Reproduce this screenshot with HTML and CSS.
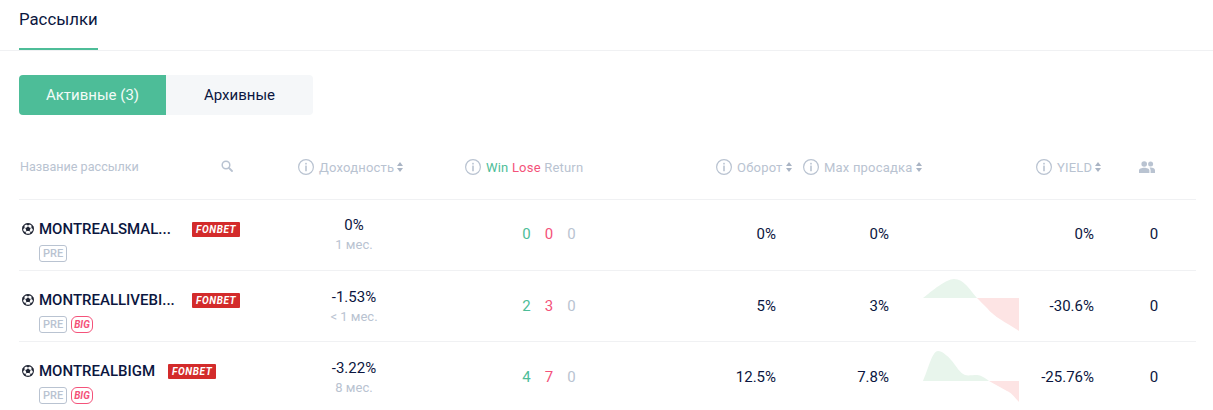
FILE: index.html
```html
<!DOCTYPE html>
<html lang="ru">
<head>
  <meta charset="UTF-8">
  <title>Рассылки</title>
  <link rel="stylesheet" href="styles.css">
</head>
<body>

<svg class="sprite" width="0" height="0">
  <symbol id="ball" viewBox="0 0 12 12">
    <circle cx="6" cy="6" r="5.4" fill="#fff" stroke="#1f2433" stroke-width="1.1"/>
    <path d="M6 3.4 8.5 5.2 7.6 8.1H4.4L3.5 5.2Z" fill="#1f2433"/>
    <path d="M3.4 .8H8.6L6 2.6ZM.6 6.6V3.2L2.6 2.4 2.4 5ZM11.4 6.6V3.2L9.4 2.4 9.6 5ZM1.4 8.4 3.6 8.8 4 11 2.4 10.4ZM10.6 8.4 8.4 8.8 8 11 9.6 10.4Z" fill="#1f2433"/>
    <path d="M6 2.6V3.6M3.6 5.2 2.4 4.8M8.4 5.2 9.6 4.8M4.6 8 3.6 8.8M7.4 8 8.4 8.8" stroke="#1f2433" stroke-width=".6"/>
  </symbol>
  <symbol id="info" viewBox="0 0 16 16">
    <circle cx="8" cy="8" r="7.4" fill="none" stroke="#b9c3d1" stroke-width="1.2"/>
    <rect x="7.2" y="3.7" width="1.6" height="1.7" rx=".5" fill="#b9c3d1"/>
    <rect x="7.2" y="6.6" width="1.6" height="5.6" rx=".5" fill="#b9c3d1"/>
  </symbol>
  <symbol id="sort" viewBox="0 0 6 10">
    <path d="M3 0 6 4H0ZM3 10 0 6H6Z" fill="#a9b4c4"/>
  </symbol>
</svg>

<div class="tabs">
  <div class="tab">Рассылки</div>
</div>

<div class="switch">
  <div class="switch-btn active">Активные (3)</div>
  <div class="switch-btn">Архивные</div>
</div>

<div class="table">
  <div class="row head">
    <div class="h-name">
      <span>Название рассылки</span>
      <svg class="search" width="12" height="12" viewBox="0 0 12 12"><circle cx="5" cy="5" r="3.8" fill="none" stroke="#b9c3d1" stroke-width="1.5"/><path d="M8 8 11 11" stroke="#b9c3d1" stroke-width="1.8" stroke-linecap="round"/></svg>
    </div>
    <div class="h-cell h-profit">
      <svg class="i-info"><use href="#info"/></svg>Доходность<svg class="i-sort"><use href="#sort"/></svg>
    </div>
    <div class="h-cell h-wlr">
      <svg class="i-info"><use href="#info"/></svg><span><span class="win">Win</span> <span class="lose">Lose</span> Return</span>
    </div>
    <div class="h-cell h-turn">
      <svg class="i-info"><use href="#info"/></svg>Оборот<svg class="i-sort"><use href="#sort"/></svg>
    </div>
    <div class="h-cell h-max">
      <svg class="i-info"><use href="#info"/></svg>Мах просадка<svg class="i-sort"><use href="#sort"/></svg>
    </div>
    <div></div>
    <div class="h-cell h-yield">
      <svg class="i-info"><use href="#info"/></svg>YIELD<svg class="i-sort"><use href="#sort"/></svg>
    </div>
    <div class="h-cell h-subs">
      <svg width="16" height="12" viewBox="0 0 16 12"><circle cx="5.2" cy="3" r="2.8" fill="#b9c3d1"/><circle cx="11.6" cy="3" r="2.5" fill="#b9c3d1"/><path d="M0 12V9.6C0 7.6 2.6 6.7 5.2 6.7S10.4 7.6 10.4 9.6V12ZM11.6 12V9.4C11.6 8.3 11.2 7.4 10.5 6.8 11 6.7 11.4 6.6 11.8 6.6 13.9 6.6 16 7.6 16 9.4V12Z" fill="#b9c3d1"/></svg>
    </div>
  </div>

  <div class="row">
    <div class="name-cell">
      <div class="name-line">
        <svg class="ball"><use href="#ball"/></svg>
        <span class="name cut">MONTREALSMAL...</span>
        <span class="bk">FONBET</span>
      </div>
      <div class="tags"><span class="tag">PRE</span></div>
    </div>
    <div class="profit">0%<small>1 мес.</small></div>
    <div class="wlr"><span class="win">0</span><span class="lose">0</span><span class="ret">0</span></div>
    <div class="val turn">0%</div>
    <div class="val">0%</div>
    <div class="chart"></div>
    <div class="val">0%</div>
    <div class="subs">0</div>
  </div>

  <div class="row">
    <div class="name-cell">
      <div class="name-line">
        <svg class="ball"><use href="#ball"/></svg>
        <span class="name cut">MONTREALLIVEBI...</span>
        <span class="bk">FONBET</span>
      </div>
      <div class="tags"><span class="tag">PRE</span><span class="tag big">BIG</span></div>
    </div>
    <div class="profit">-1.53%<small>&lt; 1 мес.</small></div>
    <div class="wlr"><span class="win">2</span><span class="lose">3</span><span class="ret">0</span></div>
    <div class="val turn">5%</div>
    <div class="val">3%</div>
    <div class="chart">
      <svg width="97" height="71" viewBox="0 0 97 71">
        <path d="M1 27C10 20 24 8 32 8 42 8 48 19 55 27Z" fill="#e8f5ec"/>
        <path d="M55 27H97V60C85 52 72 46 65 37 61 33 58 30 55 27Z" fill="#fde4e4"/>
      </svg>
    </div>
    <div class="val">-30.6%</div>
    <div class="subs">0</div>
  </div>

  <div class="row">
    <div class="name-cell">
      <div class="name-line">
        <svg class="ball"><use href="#ball"/></svg>
        <span class="name">MONTREALBIGM</span>
        <span class="bk">FONBET</span>
      </div>
      <div class="tags"><span class="tag">PRE</span><span class="tag big">BIG</span></div>
    </div>
    <div class="profit">-3.22%<small>8 мес.</small></div>
    <div class="wlr"><span class="win">4</span><span class="lose">7</span><span class="ret">0</span></div>
    <div class="val turn">12.5%</div>
    <div class="val">7.8%</div>
    <div class="chart">
      <svg width="97" height="71" viewBox="0 0 97 71">
        <path d="M1 39C6 28 10 9 16 9 20 9 26 14 30 19 34 24 38 31 43 33 46 34 50 33 55 33 59 33 63 36 67 39Z" fill="#e8f5ec"/>
        <path d="M67 39H97V60C92 55 90 51 85 49 79 46 73 42 67 39Z" fill="#fde4e4"/>
      </svg>
    </div>
    <div class="val">-25.76%</div>
    <div class="subs">0</div>
  </div>
</div>

</body>
</html>
```

FILE: styles.css
```css
html, body {
  margin: 0;
  height: 410px;
  overflow: hidden;
}
body {
  font-family: Roboto, Arial, sans-serif;
  font-size: 15px;
  color: #0b1640;
  background: #fff;
}
.sprite {
  display: block;
}
.tabs {
  height: 50px;
  padding-left: 19px;
  border-bottom: 1px solid #f0f1f3;
}
.tab {
  display: inline-block;
  box-sizing: border-box;
  height: 50px;
  padding-top: 7px;
  font-size: 16.8px;
  line-height: 24px;
  border-bottom: 2px solid #4dbd98;
}
.switch {
  display: flex;
  margin: 24px 0 0 19px;
}
.switch-btn {
  width: 147px;
  height: 40px;
  line-height: 40px;
  text-align: center;
  background: #f5f7f9;
  border-radius: 0 4px 4px 0;
}
.switch-btn.active {
  color: #f2fbf7;
  background: #4dbd98;
  border-radius: 4px 0 0 4px;
}
.table {
  width: 1177px;
  margin: 20px 0 0 19px;
}
.row {
  display: grid;
  grid-template-columns: 271px 168px 182px 155px 94px 130px 75px 102px;
  height: 71px;
  box-sizing: border-box;
  border-bottom: 1px solid #f0f1f3;
}
.row.head {
  height: 65px;
  font-size: 13px;
  letter-spacing: .2px;
  color: #b9c3d1;
  white-space: nowrap;
}
.h-name {
  display: flex;
  align-items: center;
  padding: 0 0 2px 1px;
  font-size: 12.6px;
  letter-spacing: 0;
}
.search {
  margin-left: 82px;
}
.h-cell {
  display: flex;
  align-items: center;
}
.h-profit {
  padding-left: 8px;
}
.h-wlr {
  padding-left: 7px;
}
.h-turn {
  padding-left: 76px;
}
.h-max {
  padding-left: 8px;
}
.h-yield {
  padding-left: 17px;
}
.h-subs {
  padding-left: 45px;
}
.i-info {
  width: 16px;
  height: 16px;
  margin-right: 5px;
  flex: none;
}
.i-sort {
  width: 6px;
  height: 10px;
  margin-left: 3px;
  flex: none;
}
.win {
  color: #4dbd98;
}
.lose {
  color: #f4527a;
}
.ret {
  color: #b9c3d1;
}
.name-cell {
  padding: 21px 0 0 3px;
}
.name-line {
  display: flex;
  align-items: center;
  height: 16px;
}
.ball {
  width: 12px;
  height: 12px;
  margin-right: 5px;
  flex: none;
}
.name {
  font-weight: 500;
  white-space: nowrap;
}
.name.cut {
  width: 140px;
}
.bk {
  margin-left: 13px;
  padding: 0 4px;
  height: 15px;
  line-height: 15px;
  font-size: 10px;
  font-weight: 700;
  font-style: italic;
  letter-spacing: .6px;
  color: #fff;
  background: #d32b2b;
  border-radius: 1px;
}
.tags {
  display: flex;
  gap: 4px;
  margin: 8px 0 0 17px;
}
.tag {
  box-sizing: border-box;
  height: 17px;
  padding: 0 3px;
  line-height: 15px;
  font-size: 11px;
  font-weight: 500;
  color: #b9c3d1;
  border: 1px solid #b9c3d1;
  border-radius: 3px;
}
.tag.big {
  padding: 0 2px;
  color: #f4527a;
  border-color: #f4527a;
  border-radius: 6px;
  font-size: 10px;
  font-style: italic;
  font-weight: 700;
}
.profit {
  display: flex;
  flex-direction: column;
  justify-content: center;
  align-items: center;
  padding-right: 40px;
  line-height: 19px;
}
.profit small {
  font-size: 13px;
  color: #b9c3d1;
}
.wlr {
  display: flex;
  justify-content: center;
  align-items: center;
  gap: 14px;
  padding-bottom: 2px;
}
.val {
  display: flex;
  justify-content: flex-end;
  align-items: center;
  padding-bottom: 2px;
}
.val.turn {
  padding-right: 19px;
}
.chart {
  display: flex;
  justify-content: flex-end;
}
.subs {
  display: flex;
  align-items: center;
  justify-content: center;
  padding-left: 18px;
  padding-bottom: 2px;
}
```
